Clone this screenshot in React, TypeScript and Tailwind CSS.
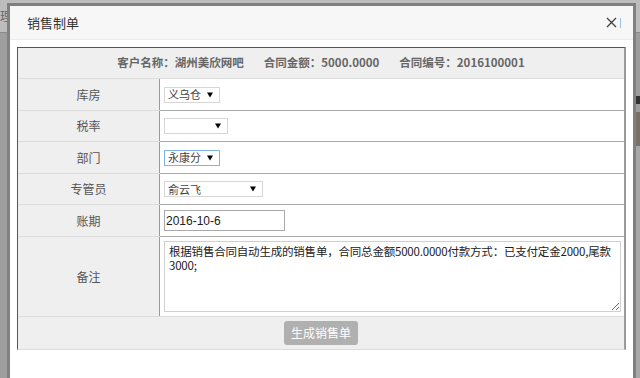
import { ReactNode } from "react";

const cjk = { fontFamily: '"Microsoft YaHei", "Noto Sans CJK SC", "Noto Sans", sans-serif' };

const FakeSelect = ({ text, width, focus }: { text: string; width: string; focus?: boolean }) => (
    <div
        className={`${width} h-[16px] flex items-center justify-between pl-[3px] pr-[6px] bg-white border ${
            focus ? "border-[#7fb2e8]" : "border-[#d6d6d6]"
        }`}
    >
        <span className="text-[11px] leading-none text-[#444]">{text}</span>
        <svg width="6" height="6" viewBox="0 0 6 6">
            <path d="M0 0.5 H6 L3 5.5 Z" fill="#000" />
        </svg>
    </div>
);

const Row = ({ label, h, children }: { label: string; h: string; children: ReactNode }) => (
    <div className={`flex ${h} border-b border-[#dcdcdc]`}>
        <div className="w-[142px] shrink-0 bg-[#efefef] border-r border-[#9a9a9a] flex items-center justify-center text-[12px] text-[#555]">
            {label}
        </div>
        <div className="flex-1 flex items-center pl-[4px] bg-white border-b border-[#a8a8a8] -mb-px">{children}</div>
    </div>
);

export default function App() {
    return (
        <div className="relative w-[640px] h-[378px] overflow-hidden bg-[#9e9e9e]" style={cjk}>
            {/* page behind the modal */}
            <div className="h-[33px] w-full bg-[#bdbdbd] border-b border-[#8a8a8a] flex items-center text-[12px] text-[#666]">
                <span>理</span>
            </div>
            <div className="absolute right-0 top-[96px] w-[4px] h-[8px] bg-[#333]" />
            <div className="absolute right-0 top-[112px] w-[4px] h-[34px] bg-[#7a7066]" />
            <div className="absolute right-0 top-[146px] w-[4px] h-[232px] bg-[#a8a8a8]" />

            {/* modal */}
            <div className="absolute left-[7px] top-[3px] w-[629px] h-[400px] border-[3px] border-[#808080] bg-white">
                <div className="h-[34px] bg-[#f7f7f7] border-b border-[#ececec] flex items-center pl-[17px] pr-[12px]">
                    <span className="text-[13px] text-[#333]">销售制单</span>
                    <svg className="ml-auto" width="11" height="11" viewBox="0 0 11 11">
                        <path d="M1 1 L10 10 M10 1 L1 10" stroke="#444" strokeWidth="1.4" />
                    </svg>
                    <span className="ml-[3px] w-px h-[10px] bg-[#9cc0e8]" />
                </div>

                <div className="pt-[7px] px-[7px]">
                    <div className="border-l border-t border-[#555] border-r-2 border-r-[#9a9a9a] border-b border-b-[#dcdcdc]">
                        <div className="h-[31px] bg-[#efefef] border-b border-[#dcdcdc] flex items-center justify-center gap-[20px] text-[11.5px] font-bold text-[#666]">
                            <span>客户名称：湖州美欣网吧</span>
                            <span>合同金额：5000.0000</span>
                            <span>合同编号：2016100001</span>
                        </div>
                        <Row label="库房" h="h-[32px]">
                            <FakeSelect text="义乌仓" width="w-[56px]" />
                        </Row>
                        <Row label="税率" h="h-[31px]">
                            <FakeSelect text="" width="w-[64px]" />
                        </Row>
                        <Row label="部门" h="h-[32px]">
                            <FakeSelect text="永康分" width="w-[56px]" focus />
                        </Row>
                        <Row label="专管员" h="h-[31px]">
                            <FakeSelect text="俞云飞" width="w-[99px]" />
                        </Row>
                        <Row label="账期" h="h-[32px]">
                            <div className="w-[121px] h-[21px] border border-[#a9a9a9] flex items-center pl-px text-[12px] text-[#222]" style={{ fontFamily: '"Liberation Sans", Arial, sans-serif' }}>
                                2016-10-6
                            </div>
                        </Row>
                        <div className="flex h-[80px] border-b border-[#dcdcdc]">
                            <div className="w-[142px] shrink-0 bg-[#efefef] border-r border-[#9a9a9a] flex items-center justify-center text-[12px] text-[#555]">
                                备注
                            </div>
                            <div className="flex-1 flex items-center pl-[4px] pr-[3px] bg-white">
                                <textarea
                                    readOnly
                                    className="w-full h-[71px] border border-[#d0d0d0] px-[4px] pt-[2px] text-[11.5px] leading-[14px] tracking-[-0.2px] text-[#222] outline-none"
                                    style={{ fontFamily: '"Noto Sans CJK SC", sans-serif' }}
                                    defaultValue={"根据销售合同自动生成的销售单，合同总金额5000.0000付款方式：已支付定金2000,尾款\n3000;"}
                                />
                            </div>
                        </div>
                        <div className="h-[32px] bg-[#efefef] flex items-center justify-center">
                            <button className="w-[74px] h-[24px] rounded-[3px] bg-[#b0b0b0] text-white text-[12px]">生成销售单</button>
                        </div>
                    </div>
                </div>
            </div>
        </div>
    );
}
